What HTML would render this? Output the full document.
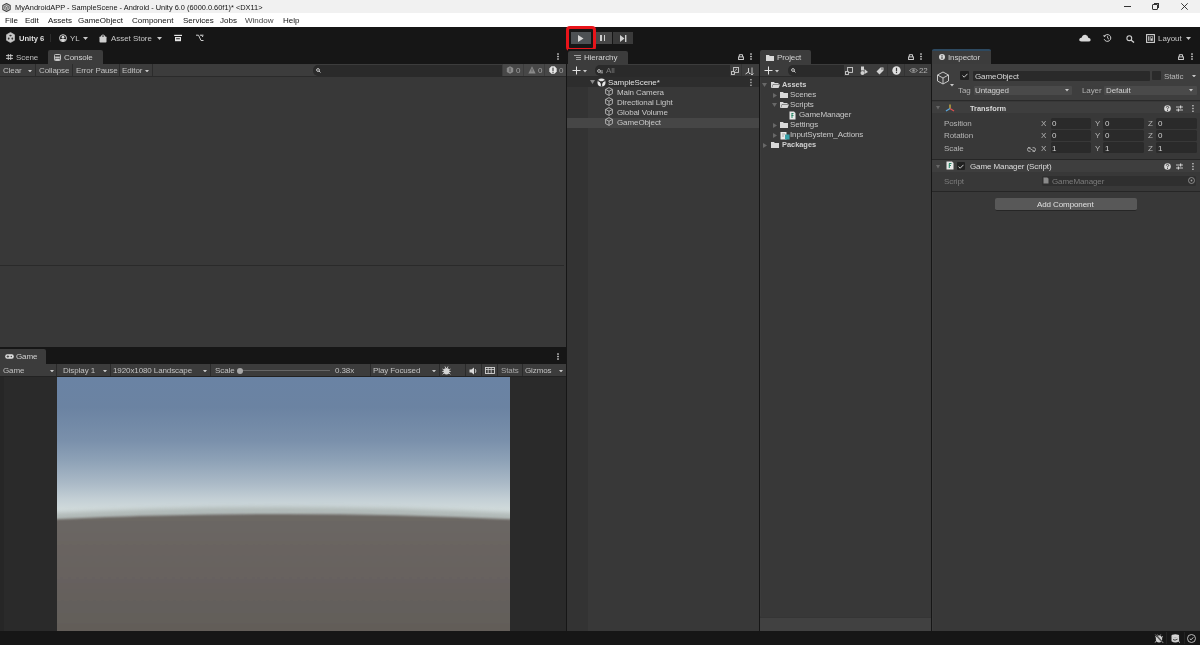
<!DOCTYPE html>
<html><head><meta charset="utf-8">
<style>
*{margin:0;padding:0;box-sizing:border-box}
html,body{width:1200px;height:645px;overflow:hidden;background:#161616;font-family:"Liberation Sans",sans-serif;font-size:8px;letter-spacing:-0.1px;color:#c4c4c4}
.a{position:absolute}
.t{position:absolute;white-space:nowrap;line-height:1;will-change:transform}
#title{left:0;top:0;width:1200px;height:13px;background:#f1f1f1}
#menu{left:0;top:13px;width:1200px;height:14px;background:#ffffff}
#tb{left:0;top:27px;width:1200px;height:22px;background:#161616}
.panel{background:#383838}
.ptb{background:#3c3c3c}
</style></head><body>
<div id="title" class="a"></div>
<div id="menu" class="a"></div>
<div id="tb" class="a"></div>


<!-- title bar content -->
<svg class="a" style="left:2px;top:2.5px" width="9" height="9" viewBox="0 0 9 9"><path d="M4.5 0.6L8.2 2.6V6.4L4.5 8.4L0.8 6.4V2.6Z" fill="#d8d8d8" stroke="#444" stroke-width="1.1" stroke-linejoin="round"/><path d="M4.5 2.4L6.4 3.4V5.6L4.5 6.6L2.6 5.6V3.4Z M4.5 4.5V6.6M4.5 4.5L6.4 3.4M4.5 4.5L2.6 3.4" fill="none" stroke="#555" stroke-width="0.7"/></svg>
<div class="t" style="left:15px;top:3.8px;font-size:7.4px;letter-spacing:0;color:#111">MyAndroidAPP - SampleScene - Android - Unity 6.0 (6000.0.60f1)* &lt;DX11&gt;</div>
<div class="a" style="left:1124px;top:6px;width:7px;height:1px;background:#333"></div>
<div class="a" style="left:1152px;top:4px;width:6px;height:6px;border:1px solid #333;border-radius:1px"></div>
<div class="a" style="left:1154px;top:3px;width:5px;height:5px;border-top:1px solid #333;border-right:1px solid #333"></div>
<svg class="a" style="left:1181px;top:3px" width="7" height="7" viewBox="0 0 7 7"><path d="M0.3 0.3L6.7 6.7M6.7 0.3L0.3 6.7" stroke="#222" stroke-width="0.9"/></svg>
<!-- menu -->
<div class="t" style="left:5px;top:16.8px;font-size:8px;letter-spacing:0;color:#111">File</div>
<div class="t" style="left:25px;top:16.8px;font-size:8px;letter-spacing:0;color:#111">Edit</div>
<div class="t" style="left:48px;top:16.8px;font-size:8px;letter-spacing:0;color:#111">Assets</div>
<div class="t" style="left:77.7px;top:16.8px;font-size:8px;letter-spacing:0;color:#111">GameObject</div>
<div class="t" style="left:131.5px;top:16.8px;font-size:8px;letter-spacing:0;color:#111">Component</div>
<div class="t" style="left:183px;top:16.8px;font-size:8px;letter-spacing:0;color:#111">Services</div>
<div class="t" style="left:219.5px;top:16.8px;font-size:8px;letter-spacing:0;color:#111">Jobs</div>
<div class="t" style="left:244.5px;top:16.8px;font-size:8px;letter-spacing:0;color:#444">Window</div>
<div class="t" style="left:282.5px;top:16.8px;font-size:8px;letter-spacing:0;color:#111">Help</div>
<!-- main toolbar -->
<svg class="a" style="left:6px;top:32px" width="9" height="11" viewBox="0 0 9 11"><path d="M4.5 0.4L8.6 2.8V8.2L4.5 10.6L0.4 8.2V2.8Z" fill="#c8c8c8" stroke="#c8c8c8" stroke-width="0.6" stroke-linejoin="round"/><ellipse cx="4.5" cy="3.6" rx="1.2" ry="0.8" fill="#333"/><ellipse cx="2.7" cy="6.6" rx="0.9" ry="1.1" fill="#333"/><ellipse cx="6.3" cy="6.6" rx="0.9" ry="1.1" fill="#333"/></svg>
<div class="t" style="left:18.5px;top:34.6px;font-size:7.6px;letter-spacing:0;font-weight:bold;color:#dedede">Unity 6</div>
<div class="a" style="left:50px;top:34px;width:1px;height:8px;background:#2c2c2c"></div>
<svg class="a" style="left:58.5px;top:33.8px" width="8" height="8.5" viewBox="0 0 8 8.5"><circle cx="4" cy="4.2" r="3.5" fill="none" stroke="#d0d0d0" stroke-width="1"/><circle cx="4" cy="3.2" r="1.4" fill="#d8d8d8"/><path d="M0.9 5.6Q4 3.9 7.1 5.6A3.6 3.6 0 0 1 0.9 5.6Z" fill="#d8d8d8"/></svg>
<div class="t" style="left:70px;top:34.8px;font-size:7.9px;letter-spacing:0;color:#c8c8c8">YL</div>
<svg class="a" style="left:83px;top:36.5px" width="5" height="3" viewBox="0 0 5 3"><path d="M0 0H5L2.5 3Z" fill="#c8c8c8"/></svg>
<svg class="a" style="left:99px;top:34px" width="8" height="9" viewBox="0 0 8 9"><path d="M2.5 3V1.6Q4 0.3 5.5 1.6V3" fill="none" stroke="#d0d0d0" stroke-width="0.9"/><rect x="0.5" y="2.5" width="7" height="6" rx="0.8" fill="#d0d0d0"/></svg>
<div class="t" style="left:110.5px;top:34.6px;font-size:7.9px;letter-spacing:0;color:#c8c8c8">Asset Store</div>
<svg class="a" style="left:156.5px;top:36.5px" width="5" height="3" viewBox="0 0 5 3"><path d="M0 0H5L2.5 3Z" fill="#c8c8c8"/></svg>
<svg class="a" style="left:174px;top:34px" width="8" height="8" viewBox="0 0 8 8"><rect x="0.2" y="0.8" width="7.8" height="1.2" fill="#e6e6e6"/><rect x="1" y="3" width="6" height="4.2" fill="#e6e6e6"/><rect x="2" y="4.3" width="4" height="1" rx="0.5" fill="#222"/></svg>
<svg class="a" style="left:195px;top:34px" width="9" height="8" viewBox="0 0 9 8"><path d="M1 1.2H3.5L6 6.5H8.5M5 1.2H8.5M6.5 1.2L8 3" fill="none" stroke="#cfcfcf" stroke-width="1"/></svg>
<!-- play controls -->
<div class="a" style="left:571px;top:32px;width:20px;height:12px;background:#4d5154"></div>
<svg class="a" style="left:578px;top:35px" width="6" height="7" viewBox="0 0 6 7"><path d="M0 0L5.5 3.5L0 7Z" fill="#d6d6d6"/></svg>
<div class="a" style="left:596px;top:32px;width:16px;height:12px;background:#474747"></div>
<div class="a" style="left:600px;top:35px;width:1.5px;height:6px;background:#cfcfcf"></div>
<div class="a" style="left:603.5px;top:35px;width:1.5px;height:6px;background:#cfcfcf"></div>
<div class="a" style="left:613px;top:32px;width:20px;height:12px;background:#3a3a3a"></div>
<svg class="a" style="left:620px;top:35px" width="7" height="7" viewBox="0 0 7 7"><path d="M0 0L4.5 3.5L0 7Z" fill="#cfcfcf"/><rect x="5" y="0" width="1.4" height="7" fill="#cfcfcf"/></svg>
<div class="a" style="left:566px;top:25.5px;width:30px;height:25px;border:3px solid #e8141a;border-radius:4px"></div>
<!-- right toolbar -->
<svg class="a" style="left:1079px;top:34px" width="12" height="8" viewBox="0 0 12 8"><path d="M2.5 7.5Q0 7.5 0.3 5.3Q0.7 3.6 2.6 3.8Q3.4 0.5 6.4 0.7Q9 1 9.3 3.8Q11.8 4 11.7 6Q11.5 7.5 9.5 7.5Z" fill="#d8d8d8"/></svg>
<svg class="a" style="left:1103px;top:34px" width="9" height="8" viewBox="0 0 9 8"><path d="M1.3 2.5A3.4 3.4 0 1 1 1.2 5.2" fill="none" stroke="#cfcfcf" stroke-width="1"/><path d="M0 1.2L1.5 3.2L3 1.6" fill="#cfcfcf"/><path d="M4.6 2.2V4.2L6 5.2" fill="none" stroke="#cfcfcf" stroke-width="0.9"/></svg>
<svg class="a" style="left:1125.5px;top:34.5px" width="9" height="8" viewBox="0 0 9 8"><circle cx="3.3" cy="3.2" r="2.4" fill="none" stroke="#d0d0d0" stroke-width="1.1"/><path d="M5 5L8 7.6" stroke="#d0d0d0" stroke-width="1.3"/></svg>
<svg class="a" style="left:1146px;top:33.5px" width="9" height="9" viewBox="0 0 9 9"><rect x="0.6" y="0.6" width="7.8" height="7.8" fill="none" stroke="#d0d0d0" stroke-width="1.1"/><rect x="2.2" y="2.2" width="1.2" height="4.6" fill="#d0d0d0"/><rect x="4.4" y="2.2" width="2.4" height="4.6" fill="#d0d0d0"/><rect x="4.9" y="2.7" width="1.4" height="1.7" fill="#222"/></svg>
<div class="t" style="left:1157.5px;top:34.8px;font-size:7.9px;letter-spacing:0;color:#c8c8c8">Layout</div>
<svg class="a" style="left:1185.5px;top:36.5px" width="5" height="3" viewBox="0 0 5 3"><path d="M0 0H5L2.5 3Z" fill="#c8c8c8"/></svg>

<!-- left upper: console -->
<div class="a" style="left:0;top:49px;width:566px;height:15px;background:#161616"></div>
<svg class="a" style="left:5.5px;top:54px" width="7" height="6" viewBox="0 0 7 6"><path d="M2.3 0V6M4.7 0V6M0 1.6H7M0 4.4H7" stroke="#cfcfcf" stroke-width="0.9"/></svg>
<div class="t" style="left:15.5px;top:54px;color:#bdbdbd">Scene</div>
<div class="a" style="left:48px;top:49.5px;width:55px;height:14.5px;background:#3c3c3c;border-radius:2px 2px 0 0"></div>
<svg class="a" style="left:54px;top:54px" width="7" height="7" viewBox="0 0 7 7"><rect x="0.5" y="0.5" width="6" height="6" rx="0.8" fill="none" stroke="#d0d0d0" stroke-width="0.9"/><rect x="1.2" y="2.6" width="4.6" height="1.3" fill="#d0d0d0"/><rect x="1.2" y="4.6" width="4.6" height="1.6" fill="#d0d0d0"/></svg>
<div class="t" style="left:64px;top:54px;color:#d2d2d2">Console</div>
<svg class="a" style="left:557.0px;top:53.0px" width="2" height="7" viewBox="0 0 2 7"><rect x="0.2" y="0.2" width="1.6" height="1.5" rx="0.5" fill="#d8d8d8"/><rect x="0.2" y="2.75" width="1.6" height="1.5" rx="0.5" fill="#d8d8d8"/><rect x="0.2" y="5.3" width="1.6" height="1.5" rx="0.5" fill="#d8d8d8"/></svg>
<div class="a" style="left:0;top:64px;width:566px;height:13px;background:#3c3c3c;border-bottom:1px solid #2a2a2a"></div>
<div class="a" style="left:35px;top:64px;width:1px;height:12px;background:#2c2c2c"></div>
<div class="a" style="left:72px;top:64px;width:1px;height:12px;background:#2c2c2c"></div>
<div class="a" style="left:119px;top:64px;width:1px;height:12px;background:#2c2c2c"></div>
<div class="a" style="left:152px;top:64px;width:1px;height:12px;background:#2c2c2c"></div>
<div class="t" style="left:3px;top:67px;color:#c2c2c2">Clear</div>
<svg class="a" style="left:27.5px;top:69.5px" width="4" height="2.5" viewBox="0 0 4 2.5"><path d="M0 0H4L2 2.5Z" fill="#c8c8c8"/></svg>
<div class="t" style="left:39px;top:67px;color:#c2c2c2">Collapse</div>
<div class="t" style="left:75.5px;top:67px;color:#c2c2c2">Error Pause</div>
<div class="t" style="left:122px;top:67px;color:#c2c2c2">Editor</div>
<svg class="a" style="left:145px;top:69.5px" width="4" height="2.5" viewBox="0 0 4 2.5"><path d="M0 0H4L2 2.5Z" fill="#c8c8c8"/></svg>
<div class="a" style="left:313px;top:64.5px;width:189px;height:11.5px;background:#2a2a2a;border-radius:5px 0 0 5px"></div>
<svg class="a" style="left:315.5px;top:68px" width="5" height="5" viewBox="0 0 5 5"><circle cx="2" cy="2" r="1.4" fill="none" stroke="#d8d8d8" stroke-width="0.9"/><path d="M3 3L4.5 4.5" stroke="#d8d8d8" stroke-width="0.9"/></svg>
<div class="a" style="left:503px;top:64px;width:20px;height:12px;background:#474747"></div>
<div class="a" style="left:524px;top:64px;width:20px;height:12px;background:#474747"></div>
<div class="a" style="left:545px;top:64px;width:21px;height:12px;background:#474747"></div>
<svg class="a" style="left:506px;top:66px" width="8" height="8" viewBox="0 0 8 8"><path d="M4 0.3L7.2 2.1V5.9L4 7.7L0.8 5.9V2.1Z" fill="#8a8a8a"/><rect x="3.4" y="1.8" width="1.2" height="4.2" fill="#5a5a5a"/></svg>
<div class="t" style="left:516px;top:67px;color:#a0a0a0">0</div>
<svg class="a" style="left:527.5px;top:66px" width="8" height="8" viewBox="0 0 8 8"><path d="M4 0.3L7.6 7.6H0.4Z" fill="#8a8a8a"/><rect x="3.5" y="2.6" width="1" height="3" fill="#5a5a5a"/></svg>
<div class="t" style="left:537.5px;top:67px;color:#a0a0a0">0</div>
<svg class="a" style="left:549px;top:66px" width="8" height="8" viewBox="0 0 8 8"><path d="M2.4 0.3H5.6L7.7 2.4V5.6L5.6 7.7H2.4L0.3 5.6V2.4Z" fill="#e6e6e6"/><rect x="3.4" y="1.6" width="1.2" height="3.5" fill="#474747"/><rect x="3.4" y="5.8" width="1.2" height="1.1" fill="#474747"/></svg>
<div class="t" style="left:559px;top:67px;color:#a0a0a0">0</div>
<div class="a" style="left:0;top:77px;width:566px;height:270px;background:#383838"></div>
<div class="a" style="left:0;top:265px;width:564px;height:1px;background:#2a2a2a"></div>

<!-- left lower: game -->
<div class="a" style="left:0;top:347px;width:566px;height:17px;background:#161616"></div>
<div class="a" style="left:0;top:349px;width:46px;height:15px;background:#3c3c3c;border-radius:0 2px 0 0"></div>
<svg class="a" style="left:5px;top:354px" width="9" height="5" viewBox="0 0 9 5"><path d="M2.2 0.3H6.8Q8.8 0.3 8.8 2.5Q8.8 4.7 6.8 4.7H2.2Q0.2 4.7 0.2 2.5Q0.2 0.3 2.2 0.3Z" fill="#dcdcdc"/><rect x="1.6" y="2.1" width="2.6" height="0.8" fill="#3c3c3c"/><rect x="2.5" y="1.2" width="0.8" height="2.6" fill="#3c3c3c"/><circle cx="6.3" cy="2.5" r="0.7" fill="#3c3c3c"/></svg>
<div class="t" style="left:15.5px;top:352.8px;color:#d2d2d2">Game</div>
<svg class="a" style="left:557.0px;top:353.0px" width="2" height="7" viewBox="0 0 2 7"><rect x="0.2" y="0.2" width="1.6" height="1.5" rx="0.5" fill="#d8d8d8"/><rect x="0.2" y="2.75" width="1.6" height="1.5" rx="0.5" fill="#d8d8d8"/><rect x="0.2" y="5.3" width="1.6" height="1.5" rx="0.5" fill="#d8d8d8"/></svg>
<div class="a" style="left:0;top:364px;width:566px;height:13px;background:#3c3c3c;border-bottom:1px solid #222"></div>
<div class="a" style="left:56px;top:364px;width:1px;height:12px;background:#2a2a2a"></div>
<div class="a" style="left:110px;top:364px;width:1px;height:12px;background:#2a2a2a"></div>
<div class="a" style="left:210px;top:364px;width:1px;height:12px;background:#2a2a2a"></div>
<div class="a" style="left:370px;top:364px;width:1px;height:12px;background:#2a2a2a"></div>
<div class="a" style="left:439px;top:364px;width:1px;height:12px;background:#2a2a2a"></div>
<div class="a" style="left:465px;top:364px;width:1px;height:12px;background:#2a2a2a"></div>
<div class="a" style="left:481px;top:364px;width:1px;height:12px;background:#2a2a2a"></div>
<div class="a" style="left:497px;top:364px;width:1px;height:12px;background:#2a2a2a"></div>
<div class="a" style="left:522px;top:364px;width:1px;height:12px;background:#2a2a2a"></div>
<div class="t" style="left:3px;top:367px;color:#c2c2c2">Game</div>
<svg class="a" style="left:50px;top:369.5px" width="4" height="2.5" viewBox="0 0 4 2.5"><path d="M0 0H4L2 2.5Z" fill="#c8c8c8"/></svg>
<div class="t" style="left:62.5px;top:367px;color:#c2c2c2">Display 1</div>
<svg class="a" style="left:103px;top:369.5px" width="4" height="2.5" viewBox="0 0 4 2.5"><path d="M0 0H4L2 2.5Z" fill="#c8c8c8"/></svg>
<div class="t" style="left:112.5px;top:367px;color:#c2c2c2">1920x1080 Landscape</div>
<svg class="a" style="left:203px;top:369.5px" width="4" height="2.5" viewBox="0 0 4 2.5"><path d="M0 0H4L2 2.5Z" fill="#c8c8c8"/></svg>
<div class="t" style="left:214.5px;top:367px;color:#c2c2c2">Scale</div>
<div class="a" style="left:240px;top:370px;width:90px;height:1px;background:#666"></div>
<div class="a" style="left:237.3px;top:367.5px;width:6px;height:6px;border-radius:50%;background:#a8a8a8"></div>
<div class="t" style="left:335px;top:367px;color:#c2c2c2">0.38x</div>
<div class="t" style="left:372.5px;top:367px;color:#c2c2c2">Play Focused</div>
<svg class="a" style="left:432px;top:369.5px" width="4" height="2.5" viewBox="0 0 4 2.5"><path d="M0 0H4L2 2.5Z" fill="#c8c8c8"/></svg>
<svg class="a" style="left:442px;top:365.5px" width="9" height="9" viewBox="0 0 9 9"><ellipse cx="4.5" cy="5.3" rx="2.9" ry="3.3" fill="#d4d4d4"/><path d="M0.5 3L2 4M8.5 3L7 4M0.3 5.5H2M8.7 5.5H7M0.6 8.3L2 7M8.4 8.3L7 7M3 0.5L3.8 2M6 0.5L5.2 2" stroke="#d4d4d4" stroke-width="0.9"/></svg>
<svg class="a" style="left:469px;top:366.5px" width="9" height="8" viewBox="0 0 9 8"><path d="M0.5 2.6H2.4L5 0.4V7.6L2.4 5.4H0.5Z" fill="#dadada"/><path d="M6.3 2.2Q7.5 4 6.3 5.8" fill="none" stroke="#dadada" stroke-width="0.9"/></svg>
<svg class="a" style="left:484.5px;top:366.5px" width="10" height="7" viewBox="0 0 10 7"><rect x="0.5" y="0.5" width="9" height="6" fill="none" stroke="#d4d4d4" stroke-width="0.9"/><path d="M0.5 2.5H9.5M3.2 0.5V6.5M6.2 0.5V6.5" stroke="#d4d4d4" stroke-width="0.8"/></svg>
<div class="t" style="left:501px;top:367px;color:#a8a8a8">Stats</div>
<div class="t" style="left:525px;top:367px;color:#c2c2c2">Gizmos</div>
<svg class="a" style="left:559px;top:369.5px" width="4" height="2.5" viewBox="0 0 4 2.5"><path d="M0 0H4L2 2.5Z" fill="#c8c8c8"/></svg>
<div class="a" style="left:0;top:377px;width:566px;height:254px;background:#2a2a2a"></div>
<div class="a" style="left:0;top:377px;width:4px;height:254px;background:#262626"></div>
<svg class="a" style="left:57px;top:377px" width="453" height="254" viewBox="0 0 453 254">
<defs>
<linearGradient id="sky" x1="0" y1="0" x2="0" y2="254" gradientUnits="userSpaceOnUse">
<stop offset="0" stop-color="#6a83a4"/>
<stop offset="0.12" stop-color="#6b83a2"/>
<stop offset="0.25" stop-color="#7a90ab"/>
<stop offset="0.33" stop-color="#8ea2b7"/>
<stop offset="0.42" stop-color="#abbac7"/>
<stop offset="0.48" stop-color="#c3cfd5"/>
<stop offset="0.52" stop-color="#d0dadb"/>
<stop offset="0.55" stop-color="#d4dcdc"/>
</linearGradient>
<linearGradient id="gnd" x1="0" y1="130" x2="0" y2="254" gradientUnits="userSpaceOnUse">
<stop offset="0" stop-color="#6d6865"/>
<stop offset="1" stop-color="#625d59"/>
</linearGradient>
<filter id="bl" x="-10%" y="-50%" width="120%" height="200%"><feGaussianBlur stdDeviation="2.2"/></filter>
<filter id="bl2" x="-10%" y="-10%" width="120%" height="120%"><feGaussianBlur stdDeviation="0.9"/></filter>
</defs>
<rect width="453" height="254" fill="url(#sky)"/>
<path d="M-20 137 Q226.5 123 473 137 L473 146 Q226.5 132 -20 146Z" fill="#9aa29f" filter="url(#bl)" opacity="0.6"/>
<path d="M-20 143 Q226.5 131 473 143 L473 270 L-20 270Z" fill="url(#gnd)" filter="url(#bl2)"/>
</svg>

<!-- hierarchy -->
<div class="a" style="left:568px;top:49px;width:190px;height:15px;background:#161616"></div>
<div class="a" style="left:567.5px;top:50.5px;width:60px;height:13.5px;background:#3c3c3c;border-radius:2px 2px 0 0"></div>
<svg class="a" style="left:574px;top:54.5px" width="7" height="5" viewBox="0 0 7 5"><path d="M0 0.5H7M2 2.5H7M2 4.5H7" stroke="#bdbdbd" stroke-width="0.8"/></svg>
<div class="t" style="left:583.5px;top:54px;color:#d2d2d2">Hierarchy</div>
<svg class="a" style="left:738.0px;top:54px" width="6" height="6" viewBox="0 0 6 6"><path d="M1.3 2.8V0.7H4.5V2.8" fill="none" stroke="#d0d0d0" stroke-width="1"/><rect x="0.6" y="2.9" width="4.8" height="2.6" fill="none" stroke="#d0d0d0" stroke-width="1"/></svg>
<svg class="a" style="left:749.5px;top:53.0px" width="2" height="7" viewBox="0 0 2 7"><rect x="0.2" y="0.2" width="1.6" height="1.5" rx="0.5" fill="#d8d8d8"/><rect x="0.2" y="2.75" width="1.6" height="1.5" rx="0.5" fill="#d8d8d8"/><rect x="0.2" y="5.3" width="1.6" height="1.5" rx="0.5" fill="#d8d8d8"/></svg>
<div class="a" style="left:567px;top:64px;width:192px;height:13px;background:#3c3c3c;border-bottom:1px solid #2a2a2a"></div>
<svg class="a" style="left:572px;top:66px" width="9" height="9" viewBox="0 0 9 9"><path d="M4.5 0.5V8.5M0.5 4.5H8.5" stroke="#e4e4e4" stroke-width="1"/></svg>
<svg class="a" style="left:583px;top:70px" width="4" height="2.5" viewBox="0 0 4 2.5"><path d="M0 0H4L2 2.5Z" fill="#c8c8c8"/></svg>
<div class="a" style="left:594.5px;top:64.5px;width:135px;height:11.5px;background:#2a2a2a;border-radius:5px 0 0 5px"></div>
<svg class="a" style="left:597px;top:68.5px" width="6" height="5" viewBox="0 0 6 5"><circle cx="2" cy="2" r="1.4" fill="none" stroke="#c8c8c8" stroke-width="0.9"/><path d="M3.2 2H6M3.2 3.8H6" stroke="#c8c8c8" stroke-width="0.8"/></svg>
<div class="t" style="left:606px;top:67px;color:#7a7a7a">All</div>
<div class="a" style="left:741px;top:64px;width:1px;height:12px;background:#333"></div>
<svg class="a" style="left:731px;top:67px" width="8" height="8" viewBox="0 0 8 8"><rect x="2.6" y="0.5" width="4.9" height="4.9" fill="none" stroke="#d0d0d0" stroke-width="0.9"/><rect x="0.5" y="4.6" width="2.9" height="2.9" fill="#3c3c3c" stroke="#d0d0d0" stroke-width="0.9"/><path d="M4.2 3.5L6 1.8" stroke="#d0d0d0" stroke-width="0.9"/></svg>
<svg class="a" style="left:745px;top:66.5px" width="10" height="9" viewBox="0 0 10 9"><path d="M3.5 1V5" stroke="#cfcfcf" stroke-width="1.1"/><path d="M0.5 7L3.5 5L5 7" fill="none" stroke="#cfcfcf" stroke-width="1"/><path d="M7 0.5V8M5.5 6.5L7 8L8.5 6.5" fill="none" stroke="#cfcfcf" stroke-width="0.9"/></svg>
<div class="a" style="left:567px;top:77px;width:192px;height:554px;background:#383838"></div>
<div class="a" style="left:567px;top:77px;width:21px;height:554px;background:#333333"></div>
<div class="a" style="left:567px;top:77px;width:192px;height:9.5px;background:#2d2d2d"></div>
<div class="a" style="left:567px;top:117.5px;width:192px;height:10px;background:#464646"></div>
<svg class="a" style="left:590px;top:79.5px" width="5" height="4" viewBox="0 0 5 4"><path d="M0 0H5L2.5 4Z" fill="#8a8a8a"/></svg>
<svg class="a" style="left:597px;top:77.5px" width="9" height="9" viewBox="0 0 9 9"><circle cx="4.5" cy="4.5" r="4" fill="#e6e6e6"/><path d="M4.5 4.5V8.5M4.5 4.5L1 2.5M4.5 4.5L8 2.5" stroke="#2d2d2d" stroke-width="1.3"/><circle cx="4.5" cy="4.5" r="1.3" fill="#2d2d2d"/></svg>
<div class="t" style="left:608px;top:78.5px;color:#e0e0e0">SampleScene*</div>
<svg class="a" style="left:750px;top:79px" width="2" height="7" viewBox="0 0 2 7"><rect x="0.3" y="0" width="1.3" height="1.4" fill="#c0c0c0"/><rect x="0.3" y="2.8" width="1.3" height="1.4" fill="#c0c0c0"/><rect x="0.3" y="5.6" width="1.3" height="1.4" fill="#c0c0c0"/></svg>
<svg class="a" style="left:605px;top:87px" width="8" height="9" viewBox="0 0 8 9"><path d="M4 0.6L7.4 2.4V6.6L4 8.4L0.6 6.6V2.4Z M4 4.3V8.4 M0.6 2.4L4 4.3L7.4 2.4" fill="none" stroke="#c6c6c6" stroke-width="0.8"/></svg>
<div class="t" style="left:616.5px;top:88.5px;color:#c8c8c8">Main Camera</div>
<svg class="a" style="left:605px;top:97px" width="8" height="9" viewBox="0 0 8 9"><path d="M4 0.6L7.4 2.4V6.6L4 8.4L0.6 6.6V2.4Z M4 4.3V8.4 M0.6 2.4L4 4.3L7.4 2.4" fill="none" stroke="#c6c6c6" stroke-width="0.8"/></svg>
<div class="t" style="left:616.5px;top:98.5px;color:#c8c8c8">Directional Light</div>
<svg class="a" style="left:605px;top:107px" width="8" height="9" viewBox="0 0 8 9"><path d="M4 0.6L7.4 2.4V6.6L4 8.4L0.6 6.6V2.4Z M4 4.3V8.4 M0.6 2.4L4 4.3L7.4 2.4" fill="none" stroke="#c6c6c6" stroke-width="0.8"/></svg>
<div class="t" style="left:616.5px;top:108.5px;color:#c8c8c8">Global Volume</div>
<svg class="a" style="left:605px;top:117px" width="8" height="9" viewBox="0 0 8 9"><path d="M4 0.6L7.4 2.4V6.6L4 8.4L0.6 6.6V2.4Z M4 4.3V8.4 M0.6 2.4L4 4.3L7.4 2.4" fill="none" stroke="#c6c6c6" stroke-width="0.8"/></svg>
<div class="t" style="left:616.5px;top:118.5px;color:#c8c8c8">GameObject</div>

<!-- project -->
<div class="a" style="left:760px;top:49px;width:171px;height:15px;background:#161616"></div>
<div class="a" style="left:760px;top:49.5px;width:51px;height:14.5px;background:#3c3c3c;border-radius:2px 2px 0 0"></div>
<svg class="a" style="left:766px;top:54.5px" width="8" height="6" viewBox="0 0 8 6"><path d="M0 0H3L3.8 1H8V6H0Z" fill="#d8d8d8"/></svg>
<div class="t" style="left:776.5px;top:54px;color:#d2d2d2">Project</div>
<svg class="a" style="left:908.0px;top:54px" width="6" height="6" viewBox="0 0 6 6"><path d="M1.3 2.8V0.7H4.5V2.8" fill="none" stroke="#d0d0d0" stroke-width="1"/><rect x="0.6" y="2.9" width="4.8" height="2.6" fill="none" stroke="#d0d0d0" stroke-width="1"/></svg>
<svg class="a" style="left:920.0px;top:53.0px" width="2" height="7" viewBox="0 0 2 7"><rect x="0.2" y="0.2" width="1.6" height="1.5" rx="0.5" fill="#d8d8d8"/><rect x="0.2" y="2.75" width="1.6" height="1.5" rx="0.5" fill="#d8d8d8"/><rect x="0.2" y="5.3" width="1.6" height="1.5" rx="0.5" fill="#d8d8d8"/></svg>
<div class="a" style="left:760px;top:64px;width:171px;height:13px;background:#3c3c3c;border-bottom:1px solid #2a2a2a"></div>
<svg class="a" style="left:764px;top:66px" width="9" height="9" viewBox="0 0 9 9"><path d="M4.5 0.5V8.5M0.5 4.5H8.5" stroke="#e4e4e4" stroke-width="1"/></svg>
<svg class="a" style="left:775px;top:70px" width="4" height="2.5" viewBox="0 0 4 2.5"><path d="M0 0H4L2 2.5Z" fill="#c8c8c8"/></svg>
<div class="a" style="left:788px;top:64.5px;width:56px;height:11.5px;background:#2a2a2a;border-radius:5px 0 0 5px"></div>
<svg class="a" style="left:790.5px;top:68px" width="5" height="5" viewBox="0 0 5 5"><circle cx="2" cy="2" r="1.4" fill="none" stroke="#d8d8d8" stroke-width="0.9"/><path d="M3 3L4.5 4.5" stroke="#d8d8d8" stroke-width="0.9"/></svg>
<svg class="a" style="left:845px;top:66.5px" width="8" height="8" viewBox="0 0 8 8"><rect x="2.6" y="0.5" width="4.9" height="4.9" fill="none" stroke="#d0d0d0" stroke-width="0.9"/><rect x="0.5" y="4.6" width="2.9" height="2.9" fill="#3c3c3c" stroke="#d0d0d0" stroke-width="0.9"/></svg>
<svg class="a" style="left:859.5px;top:66px" width="8" height="9" viewBox="0 0 8 9"><rect x="1" y="0.5" width="3" height="4" fill="#d0d0d0"/><circle cx="2.5" cy="7" r="2" fill="#d0d0d0"/><path d="M4.5 3L8 6L4.5 8Z" fill="#d0d0d0"/></svg>
<svg class="a" style="left:875.5px;top:66.5px" width="8" height="8" viewBox="0 0 8 8"><path d="M4.5 0.5H7.5V3.5L3.5 7.5L0.5 4.5Z" fill="#d0d0d0"/><circle cx="6" cy="2" r="0.7" fill="#3c3c3c"/></svg>
<div class="a" style="left:887px;top:64px;width:1px;height:12px;background:#333"></div>
<svg class="a" style="left:891.5px;top:66px" width="9" height="9" viewBox="0 0 9 9"><circle cx="4.5" cy="4.5" r="4.2" fill="#e0e0e0"/><rect x="3.9" y="1.8" width="1.2" height="3.6" fill="#3c3c3c"/><rect x="3.9" y="6" width="1.2" height="1.1" fill="#3c3c3c"/></svg>
<div class="a" style="left:904px;top:64px;width:1px;height:12px;background:#333"></div>
<svg class="a" style="left:908.5px;top:68px" width="9" height="5" viewBox="0 0 9 5"><path d="M0.5 2.5Q4.5 -1.5 8.5 2.5Q4.5 6.5 0.5 2.5Z" fill="none" stroke="#9a9a9a" stroke-width="0.9"/><circle cx="4.5" cy="2.5" r="1.2" fill="#9a9a9a"/></svg>
<div class="t" style="left:919px;top:67px;color:#b0b0b0">22</div>
<div class="a" style="left:760px;top:77px;width:171px;height:554px;background:#383838"></div>
<div class="a" style="left:760px;top:616.5px;width:171px;height:14.5px;background:#414141;border-top:1px solid #353535"></div>
<svg class="a" style="left:762px;top:83px" width="5" height="4" viewBox="0 0 5 4"><path d="M0 0H5L2.5 4Z" fill="#686868"/></svg>
<svg class="a" style="left:771px;top:82px" width="9" height="6" viewBox="0 0 9 6"><path d="M0 0H3L3.8 1H7.5V2H2L0.6 6H0Z" fill="#d8d8d8"/><path d="M2.2 2.5H9L7.5 6H0.9Z" fill="#d8d8d8"/></svg>
<div class="t" style="left:782px;top:80.6px;font-weight:bold;font-size:7.4px;letter-spacing:0;color:#d0d0d0">Assets</div>
<svg class="a" style="left:772.5px;top:92.5px" width="4" height="5" viewBox="0 0 4 5"><path d="M0 0L4 2.5L0 5Z" fill="#686868"/></svg>
<svg class="a" style="left:779.5px;top:92px" width="8" height="6" viewBox="0 0 8 6"><path d="M0 0H3L3.8 1H8V6H0Z" fill="#d8d8d8"/></svg>
<div class="t" style="left:790px;top:90.6px;color:#c8c8c8">Scenes</div>
<svg class="a" style="left:772px;top:103px" width="5" height="4" viewBox="0 0 5 4"><path d="M0 0H5L2.5 4Z" fill="#686868"/></svg>
<svg class="a" style="left:779.5px;top:102px" width="9" height="6" viewBox="0 0 9 6"><path d="M0 0H3L3.8 1H7.5V2H2L0.6 6H0Z" fill="#d8d8d8"/><path d="M2.2 2.5H9L7.5 6H0.9Z" fill="#d8d8d8"/></svg>
<div class="t" style="left:790px;top:100.6px;color:#c8c8c8">Scripts</div>
<svg class="a" style="left:789px;top:110.5px" width="7" height="9" viewBox="0 0 7 9"><path d="M0.5 0.5H5L6.5 2V8.5H0.5Z" fill="#e8e8e8"/><path d="M2.5 2.5H4.5M2.5 4.5H4.5M3 2.5V7" stroke="#2e8a6a" stroke-width="1"/></svg>
<div class="t" style="left:798.5px;top:110.6px;color:#c8c8c8">GameManager</div>
<svg class="a" style="left:772.5px;top:122.5px" width="4" height="5" viewBox="0 0 4 5"><path d="M0 0L4 2.5L0 5Z" fill="#686868"/></svg>
<svg class="a" style="left:779.5px;top:122px" width="8" height="6" viewBox="0 0 8 6"><path d="M0 0H3L3.8 1H8V6H0Z" fill="#d8d8d8"/></svg>
<div class="t" style="left:790px;top:120.6px;color:#c8c8c8">Settings</div>
<svg class="a" style="left:772.5px;top:132.5px" width="4" height="5" viewBox="0 0 4 5"><path d="M0 0L4 2.5L0 5Z" fill="#686868"/></svg>
<svg class="a" style="left:779.5px;top:130.5px" width="10" height="9" viewBox="0 0 10 9"><path d="M0.5 1H6.5V8.5H0.5Z" fill="#e8e8e8"/><rect x="5" y="3.5" width="4.5" height="5" fill="#3aa0a8"/><path d="M2 3H5M2 5H4" stroke="#888" stroke-width="0.7"/></svg>
<div class="t" style="left:790px;top:130.6px;color:#c8c8c8">InputSystem_Actions</div>
<svg class="a" style="left:762.5px;top:142.5px" width="4" height="5" viewBox="0 0 4 5"><path d="M0 0L4 2.5L0 5Z" fill="#686868"/></svg>
<svg class="a" style="left:771px;top:142px" width="8" height="6" viewBox="0 0 8 6"><path d="M0 0H3L3.8 1H8V6H0Z" fill="#d8d8d8"/></svg>
<div class="t" style="left:782px;top:140.6px;font-weight:bold;font-size:7.4px;letter-spacing:0;color:#d0d0d0">Packages</div>

<!-- inspector -->
<div class="a" style="left:932px;top:49px;width:268px;height:15px;background:#161616"></div>
<div class="a" style="left:932px;top:49px;width:59px;height:15px;background:#3c3c3c;border-top:2px solid #2d4960;border-radius:2px 2px 0 0"></div>
<svg class="a" style="left:939px;top:54px" width="6" height="6" viewBox="0 0 6 6"><circle cx="3" cy="3" r="3" fill="#d8d8d8"/><rect x="2.5" y="2.4" width="1" height="2.6" fill="#3c3c3c"/><rect x="2.5" y="1" width="1" height="0.9" fill="#3c3c3c"/></svg>
<div class="t" style="left:948px;top:54px;color:#d2d2d2">Inspector</div>
<svg class="a" style="left:1178.0px;top:54px" width="6" height="6" viewBox="0 0 6 6"><path d="M1.3 2.8V0.7H4.5V2.8" fill="none" stroke="#d0d0d0" stroke-width="1"/><rect x="0.6" y="2.9" width="4.8" height="2.6" fill="none" stroke="#d0d0d0" stroke-width="1"/></svg>
<svg class="a" style="left:1190.5px;top:53.0px" width="2" height="7" viewBox="0 0 2 7"><rect x="0.2" y="0.2" width="1.6" height="1.5" rx="0.5" fill="#d8d8d8"/><rect x="0.2" y="2.75" width="1.6" height="1.5" rx="0.5" fill="#d8d8d8"/><rect x="0.2" y="5.3" width="1.6" height="1.5" rx="0.5" fill="#d8d8d8"/></svg>
<div class="a" style="left:932px;top:64px;width:268px;height:567px;background:#383838"></div>
<div class="a" style="left:932px;top:64px;width:268px;height:37px;background:#3e3e3e;border-bottom:1px solid #2a2a2a"></div>
<svg class="a" style="left:936px;top:70.5px" width="14" height="14" viewBox="0 0 14 14"><path d="M7 1L12.5 4V10L7 13L1.5 10V4Z M7 7V13 M1.5 4L7 7L12.5 4" fill="none" stroke="#c8c8c8" stroke-width="1"/></svg>
<svg class="a" style="left:950px;top:84px" width="4" height="2.5" viewBox="0 0 4 2.5"><path d="M0 0H4L2 2.5Z" fill="#c8c8c8"/></svg>
<div class="a" style="left:960px;top:71px;width:8.5px;height:8.5px;background:#202020;border-radius:1px"></div>
<svg class="a" style="left:961.5px;top:73px" width="6" height="5" viewBox="0 0 6 5"><path d="M0.5 2.6L2.2 4.2L5.5 0.8" fill="none" stroke="#e0e0e0" stroke-width="0.9"/></svg>
<div class="a" style="left:973px;top:70.5px;width:177px;height:10px;background:#2a2a2a;border-radius:1px"></div>
<div class="t" style="left:974.5px;top:72.5px;color:#d8d8d8">GameObject</div>
<div class="a" style="left:1152px;top:71px;width:8.5px;height:8.5px;background:#2a2a2a;border-radius:1px"></div>
<div class="t" style="left:1163.5px;top:72.5px;color:#b8b8b8">Static</div>
<svg class="a" style="left:1192px;top:74.5px" width="4" height="2.5" viewBox="0 0 4 2.5"><path d="M0 0H4L2 2.5Z" fill="#c8c8c8"/></svg>
<div class="t" style="left:957.5px;top:87px;color:#b0b0b0">Tag</div>
<div class="a" style="left:974px;top:85.5px;width:98px;height:9.5px;background:#4a4a4a;border-radius:1px"></div>
<div class="t" style="left:975px;top:87px;color:#d0d0d0">Untagged</div>
<svg class="a" style="left:1065px;top:89px" width="4" height="2.5" viewBox="0 0 4 2.5"><path d="M0 0H4L2 2.5Z" fill="#c8c8c8"/></svg>
<div class="t" style="left:1081.5px;top:87px;color:#b0b0b0">Layer</div>
<div class="a" style="left:1104px;top:85.5px;width:93px;height:9.5px;background:#4a4a4a;border-radius:1px"></div>
<div class="t" style="left:1105.5px;top:87px;color:#d0d0d0">Default</div>
<svg class="a" style="left:1189px;top:89px" width="4" height="2.5" viewBox="0 0 4 2.5"><path d="M0 0H4L2 2.5Z" fill="#c8c8c8"/></svg>
<!-- transform -->
<div class="a" style="left:932px;top:102px;width:268px;height:11px;background:#3e3e3e"></div>
<svg class="a" style="left:936px;top:106px" width="4" height="3.5" viewBox="0 0 4 3.5"><path d="M0 0H4L2 3.5Z" fill="#686868"/></svg>
<svg class="a" style="left:945px;top:104px" width="10" height="8" viewBox="0 0 10 8"><path d="M5 0.5V4.5" stroke="#e0c040" stroke-width="1.2"/><path d="M5 4.5L1 7" stroke="#5aa8e0" stroke-width="1.3"/><path d="M5 4.5L9 7" stroke="#e05050" stroke-width="1.3"/></svg>
<div class="t" style="left:970px;top:104.5px;font-weight:bold;font-size:7.4px;letter-spacing:0;color:#d8d8d8">Transform</div>
<svg class="a" style="left:1164px;top:105px" width="7" height="7" viewBox="0 0 7 7"><circle cx="3.5" cy="3.5" r="3.3" fill="#d8d8d8"/><path d="M2.3 2.6Q2.3 1.4 3.5 1.4Q4.7 1.4 4.7 2.5Q4.7 3.2 3.5 3.7V4.4" fill="none" stroke="#3e3e3e" stroke-width="0.9"/><rect x="3" y="5" width="1" height="0.9" fill="#3e3e3e"/></svg>
<svg class="a" style="left:1176px;top:105px" width="7" height="7" viewBox="0 0 7 7"><path d="M0 2H7M0 5H7" stroke="#d0d0d0" stroke-width="0.9"/><rect x="4" y="0.5" width="1.2" height="3" fill="#d0d0d0"/><rect x="1.8" y="3.5" width="1.2" height="3" fill="#d0d0d0"/></svg>
<svg class="a" style="left:1191.5px;top:105px" width="2" height="7" viewBox="0 0 2 7"><rect x="0.3" y="0" width="1.3" height="1.4" fill="#d0d0d0"/><rect x="0.3" y="2.8" width="1.3" height="1.4" fill="#d0d0d0"/><rect x="0.3" y="5.6" width="1.3" height="1.4" fill="#d0d0d0"/></svg>
<div class="t" style="left:944px;top:120.0px;color:#b4b4b4">Position</div>
<div class="t" style="left:1041px;top:120.0px;color:#b4b4b4">X</div>
<div class="a" style="left:1050.5px;top:117.5px;width:40px;height:11px;background:#2a2a2a;border-radius:1.5px"></div>
<div class="t" style="left:1052.0px;top:120.0px;color:#d0d0d0">0</div>
<div class="t" style="left:1094.5px;top:120.0px;color:#b4b4b4">Y</div>
<div class="a" style="left:1103px;top:117.5px;width:41px;height:11px;background:#2a2a2a;border-radius:1.5px"></div>
<div class="t" style="left:1104.5px;top:120.0px;color:#d0d0d0">0</div>
<div class="t" style="left:1148px;top:120.0px;color:#b4b4b4">Z</div>
<div class="a" style="left:1156px;top:117.5px;width:41px;height:11px;background:#2a2a2a;border-radius:1.5px"></div>
<div class="t" style="left:1157.5px;top:120.0px;color:#d0d0d0">0</div>
<div class="t" style="left:944px;top:132.4px;color:#b4b4b4">Rotation</div>
<div class="t" style="left:1041px;top:132.4px;color:#b4b4b4">X</div>
<div class="a" style="left:1050.5px;top:129.9px;width:40px;height:11px;background:#2a2a2a;border-radius:1.5px"></div>
<div class="t" style="left:1052.0px;top:132.4px;color:#d0d0d0">0</div>
<div class="t" style="left:1094.5px;top:132.4px;color:#b4b4b4">Y</div>
<div class="a" style="left:1103px;top:129.9px;width:41px;height:11px;background:#2a2a2a;border-radius:1.5px"></div>
<div class="t" style="left:1104.5px;top:132.4px;color:#d0d0d0">0</div>
<div class="t" style="left:1148px;top:132.4px;color:#b4b4b4">Z</div>
<div class="a" style="left:1156px;top:129.9px;width:41px;height:11px;background:#2a2a2a;border-radius:1.5px"></div>
<div class="t" style="left:1157.5px;top:132.4px;color:#d0d0d0">0</div>
<div class="t" style="left:944px;top:144.8px;color:#b4b4b4">Scale</div>
<div class="t" style="left:1041px;top:144.8px;color:#b4b4b4">X</div>
<div class="a" style="left:1050.5px;top:142.3px;width:40px;height:11px;background:#2a2a2a;border-radius:1.5px"></div>
<div class="t" style="left:1052.0px;top:144.8px;color:#d0d0d0">1</div>
<div class="t" style="left:1094.5px;top:144.8px;color:#b4b4b4">Y</div>
<div class="a" style="left:1103px;top:142.3px;width:41px;height:11px;background:#2a2a2a;border-radius:1.5px"></div>
<div class="t" style="left:1104.5px;top:144.8px;color:#d0d0d0">1</div>
<div class="t" style="left:1148px;top:144.8px;color:#b4b4b4">Z</div>
<div class="a" style="left:1156px;top:142.3px;width:41px;height:11px;background:#2a2a2a;border-radius:1.5px"></div>
<div class="t" style="left:1157.5px;top:144.8px;color:#d0d0d0">1</div>
<svg class="a" style="left:1027px;top:146.5px" width="9" height="5" viewBox="0 0 9 5"><path d="M3.5 0.7H2Q0.5 0.7 0.5 2.5Q0.5 4.3 2 4.3H3.5M5.5 0.7H7Q8.5 0.7 8.5 2.5Q8.5 4.3 7 4.3H5.5M1 0.3L8 4.7" fill="none" stroke="#c0c0c0" stroke-width="0.8"/></svg>

<div class="a" style="left:932px;top:158.5px;width:268px;height:1px;background:#262626"></div>
<div class="a" style="left:932px;top:159.5px;width:268px;height:12px;background:#3e3e3e"></div>
<svg class="a" style="left:936px;top:165px" width="4" height="3.5" viewBox="0 0 4 3.5"><path d="M0 0H4L2 3.5Z" fill="#686868"/></svg>
<svg class="a" style="left:945.5px;top:161px" width="8" height="9" viewBox="0 0 8 9"><path d="M0.5 0.5H6L7.5 2V8.5H0.5Z" fill="#e8e8e8"/><path d="M3 2.5H5.5M3 4.5H5M3.3 2.5V7" stroke="#2e8a6a" stroke-width="1.1"/></svg>
<div class="a" style="left:957px;top:162px;width:7.5px;height:8px;background:#202020;border-radius:1px"></div>
<svg class="a" style="left:958px;top:163.5px" width="6" height="5" viewBox="0 0 6 5"><path d="M0.5 2.6L2.2 4.2L5.5 0.8" fill="none" stroke="#e0e0e0" stroke-width="0.9"/></svg>
<div class="t" style="left:969.5px;top:162.5px;color:#dcdcdc">Game Manager (Script)</div>
<svg class="a" style="left:1164px;top:163px" width="7" height="7" viewBox="0 0 7 7"><circle cx="3.5" cy="3.5" r="3.3" fill="#d8d8d8"/><path d="M2.3 2.6Q2.3 1.4 3.5 1.4Q4.7 1.4 4.7 2.5Q4.7 3.2 3.5 3.7V4.4" fill="none" stroke="#3e3e3e" stroke-width="0.9"/><rect x="3" y="5" width="1" height="0.9" fill="#3e3e3e"/></svg>
<svg class="a" style="left:1176px;top:163px" width="7" height="7" viewBox="0 0 7 7"><path d="M0 2H7M0 5H7" stroke="#d0d0d0" stroke-width="0.9"/><rect x="4" y="0.5" width="1.2" height="3" fill="#d0d0d0"/><rect x="1.8" y="3.5" width="1.2" height="3" fill="#d0d0d0"/></svg>
<svg class="a" style="left:1191.5px;top:163px" width="2" height="7" viewBox="0 0 2 7"><rect x="0.3" y="0" width="1.3" height="1.4" fill="#d0d0d0"/><rect x="0.3" y="2.8" width="1.3" height="1.4" fill="#d0d0d0"/><rect x="0.3" y="5.6" width="1.3" height="1.4" fill="#d0d0d0"/></svg>

<div class="t" style="left:944px;top:177.5px;color:#7c7c7c">Script</div>
<div class="a" style="left:1042px;top:175.5px;width:154px;height:10.5px;background:#2f2f2f;border-radius:1.5px"></div>
<svg class="a" style="left:1043px;top:177px" width="6" height="7" viewBox="0 0 6 7"><path d="M0.5 0.5H4.3L5.5 1.7V6.5H0.5Z" fill="#8a8a8a"/></svg>
<div class="t" style="left:1051.5px;top:177.5px;color:#7c7c7c">GameManager</div>
<svg class="a" style="left:1188px;top:177px" width="7" height="7" viewBox="0 0 7 7"><circle cx="3.5" cy="3.5" r="3" fill="none" stroke="#a0a0a0" stroke-width="0.8"/><circle cx="3.5" cy="3.5" r="0.9" fill="#a0a0a0"/></svg>
<div class="a" style="left:932px;top:191px;width:268px;height:1px;background:#262626"></div>
<div class="a" style="left:995px;top:197.5px;width:142px;height:13.5px;background:#585858;border-bottom:1px solid #262626;border-radius:2px"></div>
<div class="t" style="left:1037px;top:200.5px;color:#e0e0e0">Add Component</div>

<div class="a" style="left:760px;top:77px;width:1px;height:539px;background:#3c3c3c"></div>
<div class="a" style="left:932px;top:192px;width:1px;height:439px;background:#3c3c3c"></div>
<!-- status bar -->
<div class="a" style="left:0;top:631px;width:1200px;height:14px;background:#161616"></div>
<svg class="a" style="left:1153.5px;top:634px" width="10" height="9" viewBox="0 0 10 9"><ellipse cx="5" cy="5" rx="3.2" ry="3.6" fill="#cfcfcf"/><path d="M1 2.5L2.5 3.5M9 2.5L7.5 3.5M0.8 8.5L2.5 7M9.2 8.5L7.5 7M3.3 0.6L4 1.6M6.7 0.6L6 1.6" stroke="#cfcfcf" stroke-width="0.9"/><path d="M1.8 0.8L8.8 8.6" stroke="#191919" stroke-width="1.3"/><path d="M1.2 0.4L9.2 9" stroke="#cfcfcf" stroke-width="0.5"/></svg>
<div class="a" style="left:1166px;top:632px;width:1px;height:12px;background:#232323"></div>
<svg class="a" style="left:1171px;top:634px" width="9" height="9" viewBox="0 0 9 9"><ellipse cx="4.3" cy="1.8" rx="3.8" ry="1.5" fill="#d4d4d4"/><path d="M0.5 2V7.2Q4.3 9.6 8.1 7.2V2Q4.3 4.5 0.5 2Z" fill="#cfcfcf"/><path d="M2 5.5L4 6.2L6.5 5.2" stroke="#191919" stroke-width="0.8" fill="none"/><path d="M6.8 6L8.8 8.8" stroke="#cfcfcf" stroke-width="0.9"/></svg>
<div class="a" style="left:1183.5px;top:632px;width:1px;height:12px;background:#232323"></div>
<svg class="a" style="left:1187px;top:634px" width="9" height="9" viewBox="0 0 9 9"><circle cx="4.5" cy="4.5" r="4" fill="none" stroke="#c8c8c8" stroke-width="0.9"/><path d="M2.8 4.8L4.1 5.8L6.3 3.4" fill="none" stroke="#c8c8c8" stroke-width="1"/></svg>
</body></html>
